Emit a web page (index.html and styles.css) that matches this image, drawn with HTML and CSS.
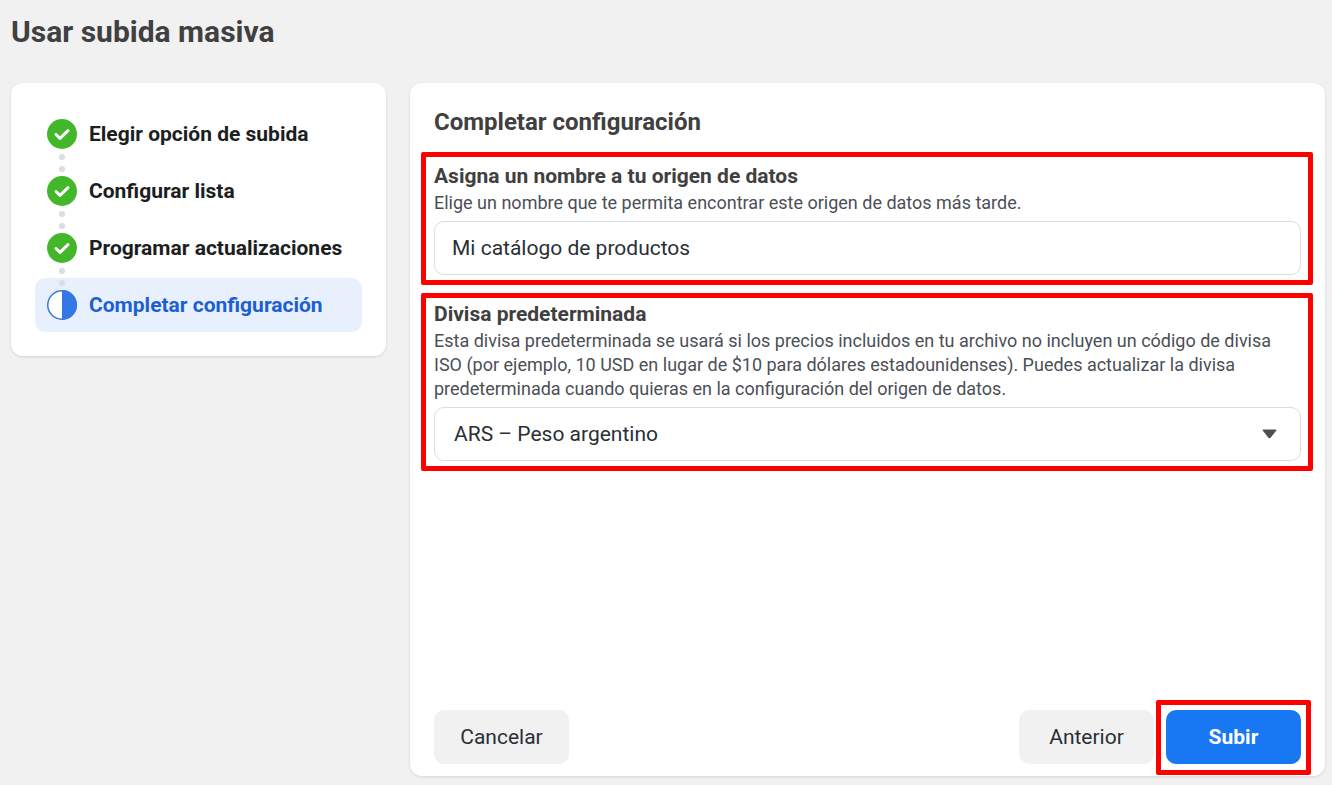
FILE: index.html
```html
<!DOCTYPE html>
<html lang="es">
<head>
<meta charset="utf-8">
<title>Usar subida masiva</title>
<link rel="stylesheet" href="styles.css">
</head>
<body>
<header class="page-header"><h1 class="page-title">Usar subida masiva</h1></header>
<div class="layout">
  <nav class="sidebar">
    <ol class="steps">
      <li class="step step-done">
        <svg class="step-icon" viewBox="0 0 30 30"><circle cx="15" cy="15" r="15" fill="#42b72a"/><path d="M9 15.5l4 3.8 8-7.6" fill="none" stroke="#fff" stroke-width="3" stroke-linecap="round" stroke-linejoin="round"/></svg>
        <span>Elegir opción de subida</span>
      </li>
      <li class="step step-done">
        <svg class="step-icon" viewBox="0 0 30 30"><circle cx="15" cy="15" r="15" fill="#42b72a"/><path d="M9 15.5l4 3.8 8-7.6" fill="none" stroke="#fff" stroke-width="3" stroke-linecap="round" stroke-linejoin="round"/></svg>
        <span>Configurar lista</span>
      </li>
      <li class="step step-done">
        <svg class="step-icon" viewBox="0 0 30 30"><circle cx="15" cy="15" r="15" fill="#42b72a"/><path d="M9 15.5l4 3.8 8-7.6" fill="none" stroke="#fff" stroke-width="3" stroke-linecap="round" stroke-linejoin="round"/></svg>
        <span>Programar actualizaciones</span>
      </li>
      <li class="step step-current">
        <svg class="step-icon" viewBox="0 0 30 30"><circle cx="15" cy="15" r="14.25" fill="#fff" stroke="#3578e5" stroke-width="1.5"/><path d="M15 0a15 15 0 0 1 0 30z" fill="#3578e5"/></svg>
        <span>Completar configuración</span>
      </li>
    </ol>
  </nav>
  <main class="panel">
    <h2 class="panel-title">Completar configuración</h2>
    <section class="field field-first">
      <h3 class="field-label">Asigna un nombre a tu origen de datos</h3>
      <p class="field-help">Elige un nombre que te permita encontrar este origen de datos más tarde.</p>
      <div class="control control-input">Mi catálogo de productos</div>
    </section>
    <section class="field field-second">
      <h3 class="field-label">Divisa predeterminada</h3>
      <p class="field-help">Esta divisa predeterminada se usará si los precios incluidos en tu archivo no incluyen un código de divisa ISO (por ejemplo, 10 USD en lugar de $10 para dólares estadounidenses). Puedes actualizar la divisa predeterminada cuando quieras en la configuración del origen de datos.</p>
      <div class="control control-select">
        <span>ARS – Peso argentino</span>
        <svg class="caret" viewBox="0 0 15 10"><path d="M1.2.5h12.6c.6 0 .9.7.5 1.1L8.6 8.8c-.6.6-1.6.6-2.2 0L.7 1.6C.3 1.2.6.5 1.2.5z" fill="#4b4f56"/></svg>
      </div>
    </section>
    <footer class="actions">
      <button class="btn btn-grey" type="button">Cancelar</button>
      <div class="actions-right">
        <button class="btn btn-grey" type="button">Anterior</button>
        <div class="highlight-box"><button class="btn btn-primary" type="button">Subir</button></div>
      </div>
    </footer>
  </main>
</div>
</body>
</html>
```

FILE: styles.css
```css
* { box-sizing: border-box; }
html, body { height: 100%; }
body {
  margin: 0;
  height: 785px;
  overflow: hidden;
  background: #f1f1f1;
  font-family: Roboto, "Liberation Sans", sans-serif;
  color: #333;
  display: flex;
  flex-direction: column;
}
.page-header { height: 83px; padding: 14px 0 0 11px; flex: none; }
.page-title { margin: 0; font-size: 30px; line-height: 36px; font-weight: 700; color: #404040; }
.layout { display: flex; gap: 24px; padding: 0 7px 9px 11px; flex: 1; min-height: 0; }
.sidebar {
  width: 375px;
  height: 273px;
  flex: none;
  background: #fff;
  border-radius: 12px;
  box-shadow: 0 1px 3px rgba(0,0,0,.12);
  padding: 24px;
}
.steps { list-style: none; margin: 0; padding: 0; display: flex; flex-direction: column; gap: 3px; }
.step {
  position: relative;
  height: 54px;
  display: flex;
  align-items: center;
  gap: 12px;
  padding-left: 12px;
  border-radius: 10px;
  font-size: 21px;
  font-weight: 700;
  color: #1c1e21;
}
.step-done::after {
  content: "";
  position: absolute;
  left: 24px;
  top: 47px;
  width: 6px;
  height: 6px;
  border-radius: 50%;
  background: #dadde1;
  box-shadow: 0 12px 0 #dadde1;
  z-index: 1;
}
.step-current { background: #e7f0fc; color: #1d5fd1; }
.step-icon { width: 30px; height: 30px; flex: none; }
.panel {
  flex: 1;
  min-width: 0;
  background: #fff;
  border-radius: 12px;
  box-shadow: 0 1px 3px rgba(0,0,0,.12);
  padding: 24px 24px 12px;
  display: flex;
  flex-direction: column;
}
.panel-title { margin: 0; font-size: 24px; line-height: 30px; font-weight: 700; color: #404040; }
.field {
  margin: 0 -12px 0 -13px;
  padding: 7px 7px 5px 8px;
  border: 5px solid #f00;
  border-radius: 2px;
}
.field-first { margin-top: 15px; }
.field-second { margin-top: 8px; padding-top: 4px; }
.field-label { margin: 0; font-size: 21px; line-height: 24px; font-weight: 700; color: #404040; }
.field-help { margin: 3px 0 6px; font-size: 18px; line-height: 24px; color: #4b4f56; }
.control {
  height: 54px;
  border: 1px solid #dadde1;
  border-radius: 10px;
  display: flex;
  align-items: center;
  font-size: 21px;
  color: #2a2f36;
}
.control-input { padding-left: 17px; }
.control-select { padding: 0 23px 0 19px; justify-content: space-between; }
.caret { width: 15px; height: 10px; flex: none; }
.actions { margin-top: auto; display: flex; justify-content: space-between; align-items: flex-end; }
.actions-right { display: flex; align-items: center; gap: 2px; }
.btn {
  width: 135px;
  height: 54px;
  border: 0;
  border-radius: 10px;
  font-family: inherit;
  font-size: 21px;
  padding: 0;
}
.btn-grey { background: #f1f1f1; color: #2a2f36; }
.btn-primary { background: #1877f2; color: #fff; font-weight: 700; display: block; }
.highlight-box { margin: -10px -10px -11px 0; padding: 5px 5px 6px; border: 5px solid #f00; border-radius: 2px; }
```
